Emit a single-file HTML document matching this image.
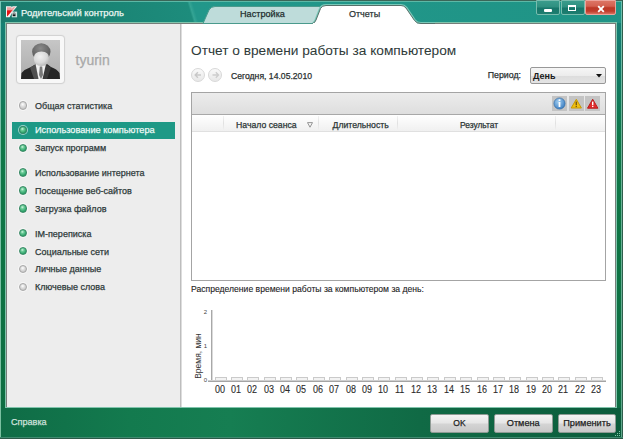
<!DOCTYPE html>
<html><head><meta charset="utf-8">
<style>
*{margin:0;padding:0;box-sizing:border-box}
html,body{width:623px;height:439px;overflow:hidden;background:#fff}
body{position:relative;font-family:"Liberation Sans",sans-serif;-webkit-text-stroke:0.25px currentColor}
.a{position:absolute;white-space:nowrap}
#frame{position:absolute;left:0;top:0;width:623px;height:439px;
 background:linear-gradient(to bottom,#1a8878 0px,#157e72 30px,#137a6c 60px,#127a5a 100px,#107849 140px,#0e7444 250px,#0e6c42 439px);}
#bb{position:absolute;left:0;top:408px;width:623px;height:31px;
 background:linear-gradient(to right,#0f6c46 0px,#137a4e 130px,#167e52 230px,#106a45 420px,#0c5c3c 623px);}
#tb{position:absolute;left:0;top:0;width:623px;height:23px;
 background:linear-gradient(73deg,#1a7a6c 0px,#1b8676 120px,#1d8c7c 185px,#34a494 187px,#22978a 190px,#1f9486 100%);}
#content{position:absolute;left:7px;top:24px;width:608px;height:383px;background:#fff;}
#side{position:absolute;left:7px;top:24px;width:173px;height:383px;background:#ededed;}

.txt9{font-size:9px;color:#2e3a3a;line-height:11px}
.bul{position:absolute;width:8.4px;height:8.4px;border-radius:50%;margin-top:0.2px;box-shadow:0 0 0 1px rgba(255,255,255,0.55)}
.bg{background:radial-gradient(circle at 40% 32%,#d0f4e0 0,#6ccc98 28%,#2ea36a 70%,#1f8a55 100%);border:1px solid #3a8a66}
.bgr{background:radial-gradient(circle at 45% 35%,#ffffff 0,#e0e0e0 35%,#b8b8b8 100%);border:1px solid #a8a8a8}
.btn{position:absolute;height:18.6px;border:1px solid #8e9a94;border-radius:2px;
 background:linear-gradient(to bottom,#f4f4f4 0,#e6e6e6 45%,#d4d4d4 55%,#c8c8c8 100%);
 font-size:9.2px;color:#1e1e1e;text-align:center;line-height:17px}
.wb{position:absolute;top:0;height:15px;border:1px solid #78bcae;border-radius:0 0 2px 2px;
 background:linear-gradient(to bottom,#3a9c8c 0,#2f9080 45%,#17766a 55%,#1d7e70 100%)}
.hd{font-size:8.7px;color:#2b3535;font-weight:normal;line-height:12.4px}
.sep{position:absolute;top:116px;width:1px;height:14px;background:linear-gradient(#f2f2f2,#e0e0e0 50%,#f0f0f0)}
.xl{font-size:10px;color:#2a2a2a;line-height:10px;-webkit-text-stroke:0.1px #2a2a2a;transform:scaleX(0.9);transform-origin:0 0}
.bar{position:absolute;top:377px;width:12px;height:3px;border:1px solid #cacaca;border-bottom:none;background:#f3f3f3}
</style></head>
<body>
<div id="frame"></div>
<div id="tb"></div>
<div id="bb"></div>
<!-- outer borders -->
<div class="a" style="left:0;top:0;width:623px;height:1px;background:#3b6658"></div>
<div class="a" style="left:0;top:1px;width:623px;height:1px;background:#5cb8a6"></div>
<div class="a" style="left:0;top:1px;width:1px;height:438px;background:linear-gradient(#78c8b8 0,#78c0a8 100px,#7ac0a0 439px)"></div>
<div class="a" style="left:622px;top:0;width:1px;height:439px;background:#2f5e4c"></div>
<div class="a" style="left:621px;top:1px;width:1px;height:438px;background:linear-gradient(#6cc0b0 0,#70b89c 120px,#60a88c 439px)"></div>
<div class="a" style="left:0;top:437px;width:623px;height:1px;background:#3f8a70"></div>
<div class="a" style="left:0;top:438px;width:623px;height:1px;background:#2b5a48"></div>

<!-- inner frame lines -->
<div class="a" style="left:5px;top:22px;width:612px;height:386px;border:1px solid #80c4ac"></div>
<div class="a" style="left:6px;top:23px;width:610px;height:384px;border:1px solid #767e7a;border-bottom:none"></div>

<!-- logo -->
<svg class="a" style="left:4px;top:5px" width="16" height="14" viewBox="4 5 16 14">
 <path d="M6 6.3 L11.3 6.3 L11.9 7.4 L12.5 6.3 L17.2 6.3 L12.8 11.4 L9.6 17.2 L6 17.2 Z" fill="#f2f2f2"/>
 <path d="M7 7.3 L10.9 7.3 L11.9 8.8 L13 7.3 L15.3 7.3 L12.6 10.4 L7 10.4 Z" fill="#eea0a0"/>
 <path d="M7 10.3 L12.6 10.3 L7.4 16.2 L7 16.2 Z" fill="#e31414"/>
 <rect x="11.8" y="11.6" width="5.3" height="5.7" fill="#cfe6e2"/>
 <rect x="12.7" y="14.3" width="2.8" height="1.9" fill="#151515"/>
 <path d="M13.1 14.4 V13.3 Q14.1 12.2 15.1 13.3 V14.4" fill="none" stroke="#505050" stroke-width="0.8"/>
</svg>
<div class="a" style="left:21px;top:6px;font-size:9.45px;color:#eaf6f2;line-height:14px">Родительский контроль</div>

<!-- tabs -->
<svg class="a" style="left:195px;top:0" width="240" height="24" viewBox="0 0 240 24">
 <path d="M8 23.5 L14 10 Q16 6.5 20 6.5 L130 6.5 L130 23.5 Z" fill="#bedcda" stroke="#4a9a8c" stroke-width="1"/>
 <path d="M117.5 23.5 Q119.5 23.5 121 20 L125.5 8.5 Q127 5.5 131 5.5 L206 5.5 Q209 5.5 211 8 L219.5 20.5 Q221.5 23.5 226 23.5 L240 23.5" fill="none" stroke="#78c8b8" stroke-width="3"/><path d="M117.5 23.5 Q119.5 23.5 121 20 L125.5 8.5 Q127 5.5 131 5.5 L206 5.5 Q209 5.5 211 8 L219.5 20.5 Q221.5 23.5 226 23.5 L240 23.5" fill="#ffffff" stroke="#56706a" stroke-width="1"/>
 <rect x="118" y="23" width="104" height="2" fill="#fff"/>
</svg>
<div class="a" style="left:240px;top:8px;font-size:9.15px;color:#1e2e2e;line-height:12px">Настройка</div>
<div class="a" style="left:349px;top:8px;font-size:9px;color:#2a3434;line-height:12px">Отчеты</div>

<!-- window buttons -->
<div class="wb" style="left:536px;width:24px"><div class="a" style="left:7px;top:7.5px;width:8px;height:3px;background:#fff;border-radius:1px"></div></div>
<div class="wb" style="left:561px;width:24px"><div class="a" style="left:6px;top:4px;width:8px;height:5.5px;border:1.5px solid #fff;border-top-width:2px"></div></div>
<div class="wb" style="left:585px;width:31px;border-color:#eca49c;background:linear-gradient(to bottom,#dc7464 0,#d46050 40%,#bc3826 52%,#c03c2c 78%,#d8705e 100%)">
 <svg class="a" style="left:11px;top:3.5px" width="8" height="8" viewBox="0 0 8 8"><path d="M1.2 1.2 L6.8 6.8 M6.8 1.2 L1.2 6.8" stroke="#fff" stroke-width="1.9"/></svg>
</div>

<!-- content -->
<div id="content"></div>
<div id="side"></div>
<div class="a" style="left:180px;top:24px;width:1px;height:383px;background:#bdbdbd"></div><div class="a" style="left:181px;top:24px;width:1px;height:383px;background:#dddddd"></div>

<!-- avatar -->
<div class="a" style="left:17px;top:36px;width:47px;height:47px;border-radius:3px;background:#f8f8f8;box-shadow:0 0 1px 1px #d0d0d0"></div>
<div class="a" style="left:21px;top:40px;width:39px;height:39px;background:linear-gradient(to bottom,#c6c6c6,#acacac);overflow:hidden">
 <svg width="39" height="39" viewBox="0 0 39 39">
  <defs>
   <radialGradient id="fg" cx="0.42" cy="0.35" r="0.7"><stop offset="0" stop-color="#f0f0f0"/><stop offset="0.6" stop-color="#dadada"/><stop offset="1" stop-color="#b4b4b4"/></radialGradient>
   <radialGradient id="hg" cx="0.45" cy="0.3" r="0.7"><stop offset="0" stop-color="#8a8a8a"/><stop offset="1" stop-color="#555555"/></radialGradient>
  </defs>
  <path d="M0 39 L0.5 33 Q4 29 10 27 L15 24 L26 24 L30 27 Q36 29 38.5 33 L39 39 Z" fill="#262626"/>
  <path d="M9 27.5 L14.5 24.5 L18 39 L13 39 Z" fill="#505050"/>
  <path d="M30 27.5 L24.5 24.5 L21 39 L26 39 Z" fill="#3a3a3a"/>
  <path d="M14.5 24 L25 24 L21.5 39 L17.5 39 Z" fill="#f0f0f0"/>
  <path d="M18.8 26.5 L21.2 26.5 L22 35 L20 39 L18 35 Z" fill="#7a7a7a"/>
  <ellipse cx="20.3" cy="11.8" rx="9.2" ry="8.6" fill="url(#hg)"/>
  <path d="M12.8 18 Q13 11.5 20.5 11.5 Q28 11.5 28 18 Q28 26 20.5 26 Q12.8 26 12.8 18 Z" fill="url(#fg)"/>
 </svg>
</div>
<div class="a" style="left:75.5px;top:51.6px;font-size:14px;color:#a9a9a9;line-height:16px">tyurin</div>

<!-- menu -->
<div class="a" style="left:12px;top:122px;width:163px;height:17px;background:#1e9986"></div>
<div class="bul bgr" style="left:19px;top:101.2px"></div>
<div class="a txt9" style="left:35px;top:101.2px">Общая статистика</div>
<div class="bul bg" style="left:19px;top:125.6px"></div>
<div class="a txt9" style="left:35px;top:125.4px;color:#eef9f6;font-size:9.2px">Использование компьютера</div>
<div class="bul bg" style="left:19px;top:143.4px"></div>
<div class="a txt9" style="left:35px;top:143.4px">Запуск программ</div>
<div class="bul bg" style="left:19px;top:168px"></div>
<div class="a txt9" style="left:35px;top:168px">Использование интернета</div>
<div class="bul bg" style="left:19px;top:186px"></div>
<div class="a txt9" style="left:35px;top:186px">Посещение веб-сайтов</div>
<div class="bul bg" style="left:19px;top:204px"></div>
<div class="a txt9" style="left:35px;top:204px">Загрузка файлов</div>
<div class="bul bg" style="left:19px;top:228.8px"></div>
<div class="a txt9" style="left:35px;top:228.8px">IM-переписка</div>
<div class="bul bg" style="left:19px;top:246.6px"></div>
<div class="a txt9" style="left:35px;top:246.6px">Социальные сети</div>
<div class="bul bgr" style="left:19px;top:264.4px"></div>
<div class="a txt9" style="left:35px;top:264.4px">Личные данные</div>
<div class="bul bgr" style="left:19px;top:282.4px"></div>
<div class="a txt9" style="left:35px;top:282.4px">Ключевые слова</div>

<!-- title -->
<div class="a" style="left:191px;top:43px;font-size:13.7px;color:#2f3b3a;line-height:16px;-webkit-text-stroke:0.05px #2f3b3a">Отчет о времени работы за компьютером</div>

<!-- nav -->
<div class="a" style="left:191px;top:68px;width:14px;height:14px;border-radius:50%;border:1px solid #d8d8d8;background:linear-gradient(#fafafa,#e8e8e8)"></div>
<div class="a" style="left:208px;top:68px;width:14px;height:14px;border-radius:50%;border:1px solid #d8d8d8;background:linear-gradient(#fafafa,#e8e8e8)"></div>
<svg class="a" style="left:191px;top:68px" width="32" height="14" viewBox="0 0 32 14">
 <path d="M10 7 L4.2 7 M6.9 4.3 L4.2 7 L6.9 9.7" stroke="#c8c8c8" stroke-width="1.4" fill="none"/>
 <path d="M21.5 7 L27.5 7 M24.8 4.3 L27.5 7 L24.8 9.7" stroke="#cdcdcd" stroke-width="1.4" fill="none"/>
</svg>
<div class="a" style="left:231px;top:69.7px;font-size:8.65px;color:#2a3030;line-height:12px">Сегодня, 14.05.2010</div>

<div class="a" style="left:487.7px;top:69.2px;font-size:8.8px;color:#2a3030;line-height:12px">Период:</div>
<div class="a" style="left:530px;top:67px;width:76px;height:17px;border:1px solid #989898;border-radius:2px;background:linear-gradient(#f6f6f6 0,#ececec 50%,#dcdcdc 51%,#e4e4e4 100%)"></div>
<div class="a" style="left:533px;top:69.5px;font-size:9px;color:#1a1a1a;font-weight:bold;line-height:12px;-webkit-text-stroke:0">День</div>
<svg class="a" style="left:595.5px;top:74px" width="6" height="4" viewBox="0 0 6 4"><path d="M0 0 L6 0 L3 3.6 Z" fill="#111"/></svg>

<!-- panel -->
<div class="a" style="left:191px;top:92px;width:415px;height:189px;border:1px solid #a4a4a4;background:#fff"></div>
<div class="a" style="left:192px;top:93px;width:413px;height:21px;background:linear-gradient(#ececec,#dedede)"></div>
<div class="a" style="left:192px;top:114px;width:413px;height:1px;background:#a8a8a8"></div>
<div class="a" style="left:192px;top:115px;width:413px;height:16px;background:linear-gradient(#ffffff,#f0f0f0)"></div>
<div class="a" style="left:192px;top:131px;width:413px;height:1px;background:#e0e0e0"></div>
<div class="sep" style="left:223px"></div>
<div class="sep" style="left:318px"></div>
<div class="sep" style="left:397px"></div>
<div class="sep" style="left:555px"></div>
<div class="a hd" style="left:236px;top:119px">Начало сеанса</div>
<svg class="a" style="left:307px;top:121.5px" width="6" height="6" viewBox="0 0 6 6"><path d="M0.5 0.6 L5.5 0.6 L3 5.2 Z" fill="none" stroke="#8a8a8a" stroke-width="0.9"/></svg>
<div class="a hd" style="left:332.5px;top:119px">Длительность</div>
<div class="a hd" style="left:460px;top:119px;font-size:8.4px">Результат</div>

<!-- icons -->
<div class="a" style="left:552px;top:96px;width:15px;height:15px;background:#c4c4c4"></div>
<div class="a" style="left:569px;top:96px;width:15px;height:15px;background:#c4c4c4"></div>
<div class="a" style="left:585px;top:96px;width:15px;height:15px;background:#c4c4c4"></div>
<svg class="a" style="left:552px;top:96px" width="48" height="15" viewBox="0 0 48 15">
 <defs><radialGradient id="gi" cx="0.4" cy="0.35" r="0.7"><stop offset="0" stop-color="#a0cdf0"/><stop offset="1" stop-color="#3a7cc0"/></radialGradient></defs>
 <circle cx="7.5" cy="7.5" r="5.6" fill="url(#gi)" stroke="#2a64a0" stroke-width="0.6"/>
 <rect x="6.6" y="6" width="1.8" height="5" fill="#fff"/><rect x="6.6" y="3.3" width="1.8" height="1.7" fill="#fff"/>
 <path d="M24.3 3.3 L29.4 12 L19.2 12 Z" fill="#f0c010" stroke="#c89a00" stroke-width="1" stroke-linejoin="round"/>
 <rect x="23.6" y="5.6" width="1.4" height="3.6" fill="#7a5a10"/><rect x="23.6" y="9.9" width="1.4" height="1.2" fill="#7a5a10"/>
 <path d="M40.7 3.2 L45.9 12.2 L35.5 12.2 Z" fill="#e02a2a" stroke="#b81c1c" stroke-width="1" stroke-linejoin="round"/>
 <rect x="40" y="5.6" width="1.4" height="3.6" fill="#fff"/><rect x="40" y="9.9" width="1.4" height="1.2" fill="#fff"/>
</svg>

<!-- chart -->
<div class="a" style="left:191px;top:283px;font-size:8.6px;color:#222;line-height:12px;-webkit-text-stroke:0.1px #222">Распределение времени работы за компьютером за день:</div>
<div class="a" style="left:211px;top:310px;width:1px;height:71px;background:#a8a8a8"></div><div class="a" style="left:212px;top:310px;width:1px;height:71px;background:#dadada"></div>
<div class="a" style="left:208px;top:380px;width:398px;height:1px;background:#cfcfcf"></div><div class="a" style="left:208px;top:381px;width:398px;height:1px;background:#a4a4a4"></div>
<div class="a" style="left:200.5px;top:307px;width:10px;height:10px;font-size:6px;color:#444;line-height:10px;text-align:center;-webkit-text-stroke:0">2</div>
<div class="a" style="left:200.5px;top:341px;width:10px;height:10px;font-size:6px;color:#444;line-height:10px;text-align:center;-webkit-text-stroke:0">1</div>
<div class="a" style="left:200.5px;top:375.4px;width:10px;height:10px;font-size:6px;color:#444;line-height:10px;text-align:center;-webkit-text-stroke:0">0</div>
<div class="a" style="left:175.2px;top:350.6px;width:46px;font-size:8.5px;color:#333;line-height:10px;transform:rotate(-90deg);text-align:center;-webkit-text-stroke:0">Время, мин</div>
<div class="bar" style="left:214.6px"></div>
<div class="bar" style="left:231.0px"></div>
<div class="bar" style="left:247.3px"></div>
<div class="bar" style="left:263.7px"></div>
<div class="bar" style="left:280.1px"></div>
<div class="bar" style="left:296.4px"></div>
<div class="bar" style="left:312.8px"></div>
<div class="bar" style="left:329.2px"></div>
<div class="bar" style="left:345.6px"></div>
<div class="bar" style="left:361.9px"></div>
<div class="bar" style="left:378.3px"></div>
<div class="bar" style="left:394.7px"></div>
<div class="bar" style="left:411.0px"></div>
<div class="bar" style="left:427.4px"></div>
<div class="bar" style="left:443.8px"></div>
<div class="bar" style="left:460.1px"></div>
<div class="bar" style="left:476.5px"></div>
<div class="bar" style="left:492.9px"></div>
<div class="bar" style="left:509.3px"></div>
<div class="bar" style="left:525.6px"></div>
<div class="bar" style="left:542.0px"></div>
<div class="bar" style="left:558.4px"></div>
<div class="bar" style="left:574.7px"></div>
<div class="bar" style="left:591.1px"></div>

<div class="a xl" style="left:214.6px;top:385px">00</div>
<div class="a xl" style="left:231.0px;top:385px">01</div>
<div class="a xl" style="left:247.3px;top:385px">02</div>
<div class="a xl" style="left:263.7px;top:385px">03</div>
<div class="a xl" style="left:280.1px;top:385px">04</div>
<div class="a xl" style="left:296.4px;top:385px">05</div>
<div class="a xl" style="left:312.8px;top:385px">06</div>
<div class="a xl" style="left:329.2px;top:385px">07</div>
<div class="a xl" style="left:345.6px;top:385px">08</div>
<div class="a xl" style="left:361.9px;top:385px">09</div>
<div class="a xl" style="left:378.3px;top:385px">10</div>
<div class="a xl" style="left:394.7px;top:385px">11</div>
<div class="a xl" style="left:411.0px;top:385px">12</div>
<div class="a xl" style="left:427.4px;top:385px">13</div>
<div class="a xl" style="left:443.8px;top:385px">14</div>
<div class="a xl" style="left:460.1px;top:385px">15</div>
<div class="a xl" style="left:476.5px;top:385px">16</div>
<div class="a xl" style="left:492.9px;top:385px">17</div>
<div class="a xl" style="left:509.3px;top:385px">18</div>
<div class="a xl" style="left:525.6px;top:385px">19</div>
<div class="a xl" style="left:542.0px;top:385px">20</div>
<div class="a xl" style="left:558.4px;top:385px">21</div>
<div class="a xl" style="left:574.7px;top:385px">22</div>
<div class="a xl" style="left:591.1px;top:385px">23</div>


<!-- bottom -->
<div class="a" style="left:11px;top:415.7px;font-size:9.1px;color:#cfe2dc;line-height:12px">Справка</div>
<div class="btn" style="left:430px;top:414px;width:59px;font-size:8.5px">OK</div>
<div class="btn" style="left:494px;top:414px;width:58.5px">Отмена</div>
<div class="btn" style="left:558px;top:414px;width:58px">Применить</div>
<div class="a" style="left:619px;top:431px;width:1px;height:1px;background:#80c8a8"></div><div class="a" style="left:617px;top:433px;width:1px;height:1px;background:#80c8a8"></div><div class="a" style="left:619px;top:433px;width:1px;height:1px;background:#80c8a8"></div><div class="a" style="left:615px;top:435px;width:1px;height:1px;background:#80c8a8"></div><div class="a" style="left:617px;top:435px;width:1px;height:1px;background:#80c8a8"></div><div class="a" style="left:619px;top:435px;width:1px;height:1px;background:#80c8a8"></div>
</body></html>
